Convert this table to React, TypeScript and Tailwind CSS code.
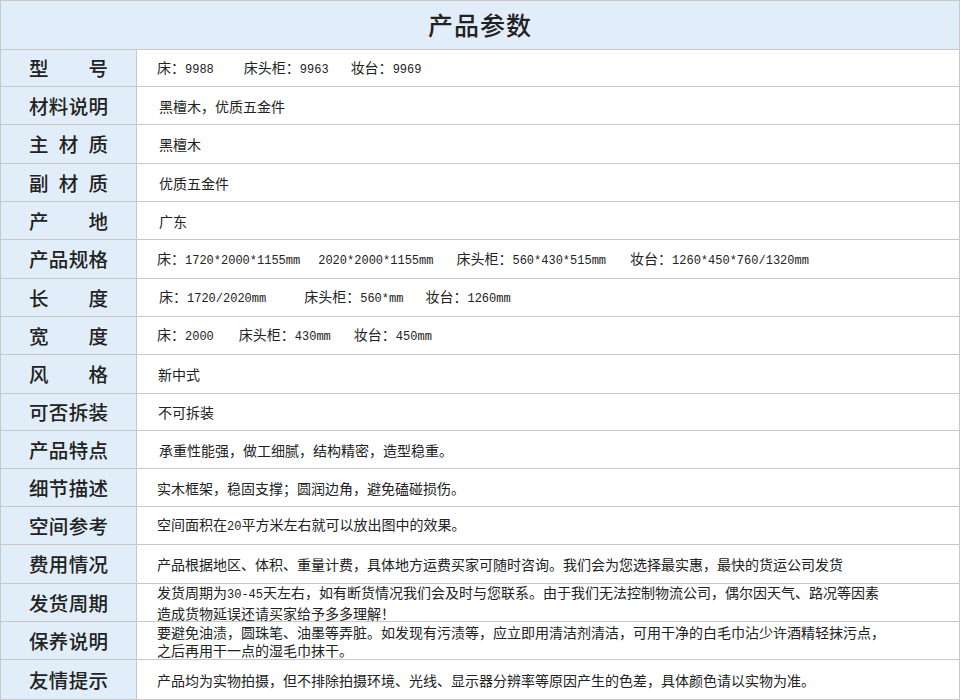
import React from "react";

type Row = {
  label: string[];
  h: string;
  value: React.ReactNode;
};

// ASCII runs get a narrow mono face, like the old SimSun half-width glyphs
function T({ s }: { s: string }) {
  const parts = s.split(/([\x21-\x7e]+)/);
  return (
    <>
      {parts.map((p, i) =>
        i % 2 === 1 ? (
          <span key={i} className="font-['Liberation_Mono',monospace] text-[12px]">
            {p}
          </span>
        ) : (
          <React.Fragment key={i}>{p}</React.Fragment>
        )
      )}
    </>
  );
}

const rows: Row[] = [
  {
    label: ["型", "号"],
    h: "h-[37px]",
    value: (
      <>
        <T s="床：9988" />
        <span className="inline-block w-[30px]" />
        <T s="床头柜：9963" />
        <span className="inline-block w-[22px]" />
        <T s="妆台：9969" />
      </>
    ),
  },
  { label: ["材", "料", "说", "明"], h: "h-[38px]", value: <span className="pl-[2px]">黑檀木，优质五金件</span> },
  { label: ["主", "材", "质"], h: "h-[39px]", value: <span className="pl-[2px]">黑檀木</span> },
  { label: ["副", "材", "质"], h: "h-[38px]", value: <span className="pl-[2px]">优质五金件</span> },
  { label: ["产", "地"], h: "h-[38px]", value: <span className="pl-[2px]">广东</span> },
  {
    label: ["产", "品", "规", "格"],
    h: "h-[39px]",
    value: (
      <>
        <T s="床：1720*2000*1155mm" />
        <span className="inline-block w-[18px]" />
        <T s="2020*2000*1155mm" />
        <span className="inline-block w-[23px]" />
        <T s="床头柜：560*430*515mm" />
        <span className="inline-block w-[24px]" />
        <T s="妆台：1260*450*760/1320mm" />
      </>
    ),
  },
  {
    label: ["长", "度"],
    h: "h-[38px]",
    value: (
      <span className="pl-[2px]">
        <T s="床：1720/2020mm" />
        <span className="inline-block w-[38px]" />
        <T s="床头柜：560*mm" />
        <span className="inline-block w-[22px]" />
        <T s="妆台：1260mm" />
      </span>
    ),
  },
  {
    label: ["宽", "度"],
    h: "h-[38px]",
    value: (
      <>
        <T s="床：2000" />
        <span className="inline-block w-[25px]" />
        <T s="床头柜：430mm" />
        <span className="inline-block w-[23px]" />
        <T s="妆台：450mm" />
      </>
    ),
  },
  { label: ["风", "格"], h: "h-[39px]", value: <span className="pl-[1px]">新中式</span> },
  { label: ["可", "否", "拆", "装"], h: "h-[37px]", value: <span className="pl-[1px]">不可拆装</span> },
  { label: ["产", "品", "特", "点"], h: "h-[38px]", value: <span className="pl-[2px]">承重性能强，做工细腻，结构精密，造型稳重。</span> },
  { label: ["细", "节", "描", "述"], h: "h-[38px]", value: "实木框架，稳固支撑；圆润边角，避免磕碰损伤。" },
  { label: ["空", "间", "参", "考"], h: "h-[38px]", value: <T s="空间面积在20平方米左右就可以放出图中的效果。" /> },
  { label: ["费", "用", "情", "况"], h: "h-[39px]", value: "产品根据地区、体积、重量计费，具体地方运费买家可随时咨询。我们会为您选择最实惠，最快的货运公司发货" },
  {
    label: ["发", "货", "周", "期"],
    h: "h-[38px]",
    value: (
      <>
        <T s="发货周期为30-45天左右，如有断货情况我们会及时与您联系。由于我们无法控制物流公司，偶尔因天气、路况等因素" />
        <br />
        造成货物延误还请买家给予多多理解！
      </>
    ),
  },
  {
    label: ["保", "养", "说", "明"],
    h: "h-[38px]",
    value: (
      <>
        要避免油渍，圆珠笔、油墨等弄脏。如发现有污渍等，应立即用清洁剂清洁，可用干净的白毛巾沾少许酒精轻抹污点，
        <br />
        之后再用干一点的湿毛巾抹干。
      </>
    ),
  },
  { label: ["友", "情", "提", "示"], h: "h-[40px]", value: "产品均为实物拍摄，但不排除拍摄环境、光线、显示器分辨率等原因产生的色差，具体颜色请以实物为准。" },
];

export default function App() {
  return (
    <div className="w-[960px] h-[700px] bg-white font-['Noto_Sans_CJK_SC',sans-serif] text-[#222]">
      <div className="border border-[#c8c8c8] border-b-0">
        <div className="h-[49px] bg-[#e1eef9] border-b border-[#c8c8c8] flex items-center justify-center">
          <span className="text-[25px] font-medium tracking-[1px] text-[#222]">产品参数</span>
        </div>
        {rows.map((r, i) => (
          <div key={i} className={`flex border-b border-[#c8c8c8] ${r.h}`}>
            <div className="w-[136px] shrink-0 bg-[#e1eef9] border-r border-[#c8c8c8] flex items-center justify-center">
              <div className="w-[79px] flex justify-between text-[19.5px] font-medium leading-none text-[#222]">
                {r.label.map((c, j) => (
                  <span key={j}>{c}</span>
                ))}
              </div>
            </div>
            <div className="flex-1 flex items-center pl-[20px] text-[14px] leading-[18px] text-[#222] whitespace-nowrap">
              <div>{r.value}</div>
            </div>
          </div>
        ))}
      </div>
    </div>
  );
}
